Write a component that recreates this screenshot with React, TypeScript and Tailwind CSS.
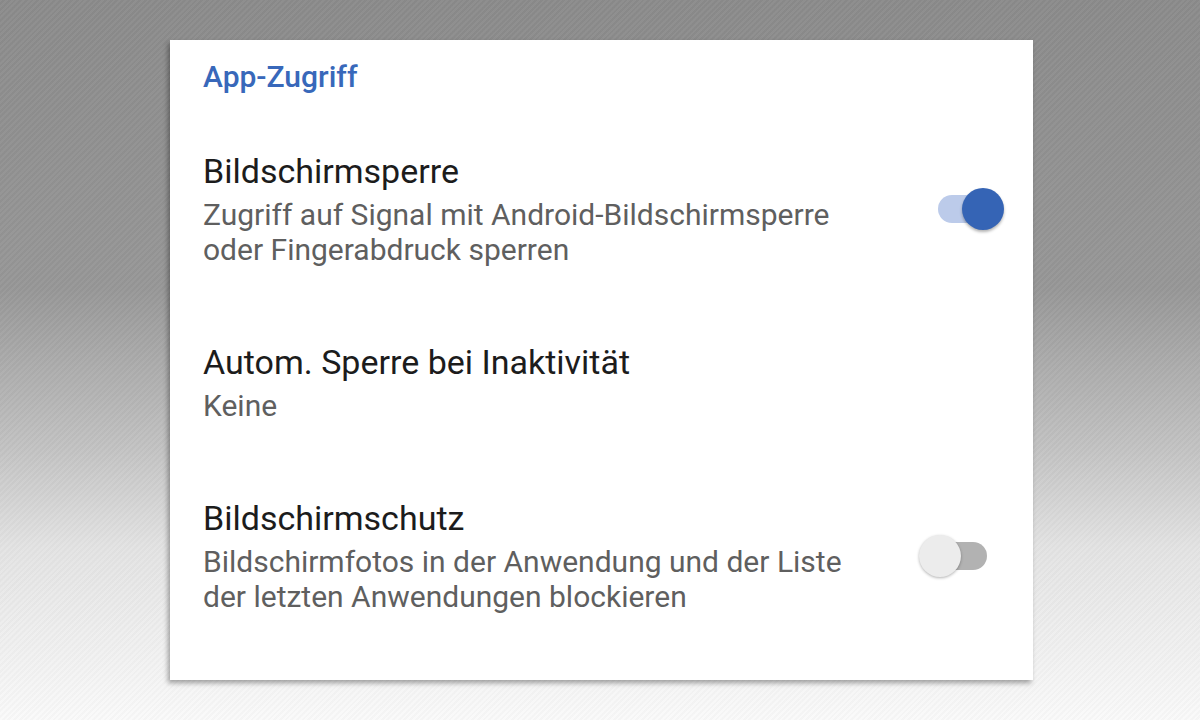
import React from 'react'

interface ToggleProps {
  on: boolean
}

function Toggle({ on }: ToggleProps) {
  return (
    <div className="relative w-[86px] h-[44px] shrink-0">
      <div
        className={
          on
            ? 'absolute left-[19px] top-[8px] w-[47px] h-[28px] rounded-full bg-[#bccbea]'
            : 'absolute left-[21px] top-[8px] w-[47px] h-[28px] rounded-full bg-[#b2b2b2]'
        }
      />
      <div
        className={
          on
            ? 'absolute left-[43px] top-[1px] w-[42px] h-[42px] rounded-full bg-[#3564b5] shadow-[0_2px_3px_rgba(0,0,0,0.3)]'
            : 'absolute left-0 top-[1px] w-[42px] h-[42px] rounded-full bg-[#ececec] shadow-[0_1px_3px_rgba(0,0,0,0.3)]'
        }
      />
    </div>
  )
}

interface SettingRowProps {
  title: string
  lines: string[]
  toggle?: boolean
}

function SettingRow({ title, lines, toggle }: SettingRowProps) {
  return (
    <div className="flex items-center justify-between">
      <div>
        <div className="text-[34px] leading-[40px] text-[#1c1c1c]">{title}</div>
        <div className="mt-[6px] text-[30px] leading-[35px] text-[#5f5f5f]">
          {lines.map((line) => (
            <div key={line}>{line}</div>
          ))}
        </div>
      </div>
      {toggle !== undefined && <Toggle on={toggle} />}
    </div>
  )
}

export default function App() {
  return (
    <div
      className="w-full h-[720px] pt-[40px] pl-[170px] bg-[repeating-linear-gradient(135deg,rgba(255,255,255,0.03)_0_2px,rgba(0,0,0,0.02)_2px_4px),linear-gradient(to_bottom,#8b8b8b_0%,#979797_40%,#c2c2c2_62%,#e3e3e3_76%,#fafafa_100%)]"
      style={{ fontFamily: 'Roboto, "Noto Sans", sans-serif' }}
    >
      <div className="w-[863px] h-[640px] bg-white pt-[19px] pl-[33px] pr-[28px] shadow-[-2px_3px_5px_rgba(0,0,0,0.35)]">
        {/* Section header */}
        <div className="text-[30px] leading-[36px] font-medium text-[#3868ba]">App-Zugriff</div>

        <div className="mt-[56px] flex flex-col gap-[75px]">
          <SettingRow
            title="Bildschirmsperre"
            lines={['Zugriff auf Signal mit Android-Bildschirmsperre', 'oder Fingerabdruck sperren']}
            toggle={true}
          />
          <SettingRow title="Autom. Sperre bei Inaktivität" lines={['Keine']} />
          <SettingRow
            title="Bildschirmschutz"
            lines={['Bildschirmfotos in der Anwendung und der Liste', 'der letzten Anwendungen blockieren']}
            toggle={false}
          />
        </div>
      </div>
    </div>
  )
}
